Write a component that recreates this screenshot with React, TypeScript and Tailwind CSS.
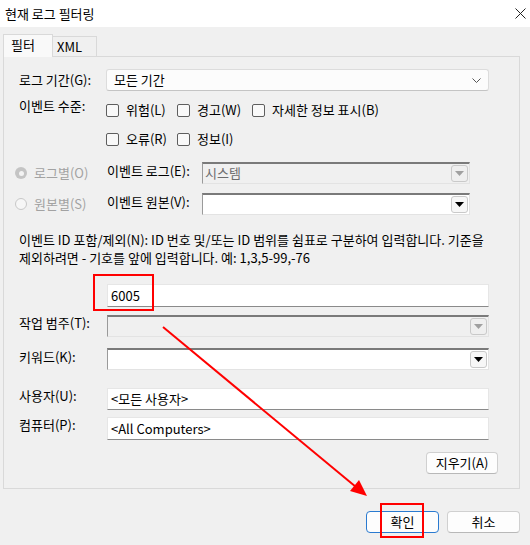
import React from 'react'

const font = { fontFamily: '"Noto Sans CJK KR", "Noto Sans", sans-serif' }

function Check({ label, w }: { label: string; w: string }) {
  return (
    <div className={`flex items-center ${w}`}>
      <span className="w-[13px] h-[13px] rounded-[2px] border border-[#5e5e5e] bg-[#f9f9f9]" />
      <span className="ml-[7px]">{label}</span>
    </div>
  )
}

function Radio({ label, checked }: { label: string; checked?: boolean }) {
  return (
    <div className="flex items-center w-[92px] pl-[11px] text-[#a2a2a2]">
      {checked ? (
        <span className="w-[12px] h-[12px] rounded-full bg-[#c4c4c4] flex items-center justify-center">
          <span className="w-[5px] h-[5px] rounded-full bg-[#f3f3f3]" />
        </span>
      ) : (
        <span className="w-[12px] h-[12px] rounded-full border border-[#c8c8c8] bg-[#f6f6f6]" />
      )}
      <span className="ml-[7px]">{label}</span>
    </div>
  )
}

// old style combo box with sunken border
function ClassicCombo({ w, disabled, value }: { w: string; disabled?: boolean; value?: string }) {
  return (
    <div className={`${w} h-[22px] flex border-t-2 border-l border-t-[#7a7a7a] border-l-[#9a9a9a] border-r border-b border-r-[#e3e3e3] border-b-[#e3e3e3] ${disabled ? 'bg-[#f0f0f0]' : 'bg-white'}`}>
      <div className={`flex-1 pl-[2px] leading-[18px] ${disabled ? 'text-[#6d6d6d]' : ''}`}>{value}</div>
      <div className="w-[19px] flex items-center justify-center">
        <span className={`w-[17px] h-[17px] rounded-[3px] border border-[#c9c9c9] flex items-center justify-center ${disabled ? 'bg-[#efefef]' : 'bg-[#f7f7f7]'}`}>
          <svg width="9" height="5" viewBox="0 0 9 5">
            <polygon points="0,0 9,0 4.5,5" fill={disabled ? '#a0a0a0' : '#000'} />
          </svg>
        </span>
      </div>
    </div>
  )
}

function TextBox({ value, h = 'h-[22px]' }: { value: string; h?: string }) {
  return (
    <div className={`w-[382px] ${h} bg-white border border-[#e6e6e6] border-b-[#8a8a8a] pl-[3px] flex items-center`}>
      {value}
    </div>
  )
}

function Button({ label, w, primary }: { label: string; w: string; primary?: boolean }) {
  return (
    <div
      className={`${w} h-[22px] rounded-[4px] bg-[#fdfdfd] border flex items-center justify-center ${
        primary ? 'border-[#2a7ad0]' : 'border-[#d0d0d0] border-b-[#b8b8b8]'
      }`}
    >
      {label}
    </div>
  )
}

export default function App() {
  return (
    <div className="relative w-[530px] h-[545px] overflow-hidden bg-[#f0f0f0] text-[13px] text-black" style={font}>
      {/* title bar */}
      <div className="h-[27px] bg-white flex items-center justify-between pl-[5px] pr-[3px]">
        <span>현재 로그 필터링</span>
        <svg width="11" height="11" viewBox="0 0 11 11" className="mr-[1px]">
          <path d="M0.5 0.5 L10.5 10.5 M10.5 0.5 L0.5 10.5" stroke="#222" strokeWidth="1" />
        </svg>
      </div>

      {/* tabs */}
      <div className="flex items-end pl-[3px] pt-[6px] h-[29px]">
        <div className="w-[50px] h-[23px] bg-[#f9f9f9] border border-b-0 border-[#d9d9d9] pl-[7px] leading-[20px] relative z-10 -mb-px">
          필터
        </div>
        <div className="w-[44px] h-[20px] border border-l-0 border-b-0 border-[#d9d9d9] pl-[4px] leading-[19px] bg-[#f0f0f0]">
          XML
        </div>
      </div>

      {/* panel */}
      <div className="ml-[3px] w-[517px] h-[433px] border border-[#d9d9d9] bg-[#f0f0f0] flex flex-col">
        <div className="mt-[12px] flex items-center pl-[15px]">
          <span className="w-[87px]">로그 기간(G):</span>
          <div className="w-[383px] h-[22px] rounded-[3px] border border-[#dcdcdc] border-b-[#c4c4c4] bg-[#fcfcfc] flex items-center justify-between pl-[7px] pr-[7px]">
            <span>모든 기간</span>
            <svg width="9" height="5" viewBox="0 0 9 5">
              <path d="M0.5 0.5 L4.5 4.5 L8.5 0.5" stroke="#555" strokeWidth="1" fill="none" />
            </svg>
          </div>
        </div>

        <div className="mt-[7px] flex items-start pl-[15px]">
          <span className="w-[87px] leading-[16px]">이벤트 수준:</span>
          <div className="flex flex-col">
            <div className="mt-[4px] flex h-[16px]">
              <Check label="위험(L)" w="w-[71px]" />
              <Check label="경고(W)" w="w-[75px]" />
              <Check label="자세한 정보 표시(B)" w="w-[150px]" />
            </div>
            <div className="mt-[13px] flex h-[16px]">
              <Check label="오류(R)" w="w-[71px]" />
              <Check label="정보(I)" w="w-[75px]" />
            </div>
          </div>
        </div>

        <div className="mt-[15px] flex items-start">
          <div className="h-[22px] flex items-center">
            <Radio label="로그별(O)" checked />
          </div>
          <span className="w-[95px] leading-[16px] mt-[1px] ml-[11px]">이벤트 로그(E):</span>
          <ClassicCombo w="w-[268px]" disabled value="시스템" />
        </div>

        <div className="mt-[9px] flex items-start">
          <div className="h-[22px] flex items-center">
            <Radio label="원본별(S)" />
          </div>
          <span className="w-[95px] leading-[16px] mt-[1px] ml-[11px]">이벤트 원본(V):</span>
          <ClassicCombo w="w-[268px]" />
        </div>

        <div className="mt-[16px] pl-[15px] leading-[18px] whitespace-nowrap">
          <div>이벤트 ID 포함/제외(N): ID 번호 및/또는 ID 범위를 쉼표로 구분하여 입력합니다. 기준을</div>
          <div>제외하려면 - 기호를 앞에 입력합니다. 예: 1,3,5-99,-76</div>
        </div>

        <div className="mt-[17px] flex items-start pl-[103px]">
          <TextBox value="6005" h="h-[23px]" />
        </div>

        <div className="mt-[8px] flex items-start pl-[15px]">
          <span className="w-[88px] leading-[16px]">작업 범주(T):</span>
          <ClassicCombo w="w-[382px]" disabled />
        </div>

        <div className="mt-[11px] flex items-start pl-[15px]">
          <span className="w-[88px] leading-[16px] mt-[1px]">키워드(K):</span>
          <ClassicCombo w="w-[382px]" />
        </div>

        <div className="mt-[18px] flex items-start pl-[15px]">
          <span className="w-[88px] leading-[16px]">사용자(U):</span>
          <TextBox value="<모든 사용자>" />
        </div>

        <div className="mt-[7px] flex items-start pl-[15px]">
          <span className="w-[88px] leading-[16px]">컴퓨터(P):</span>
          <TextBox value="<All Computers>" h="h-[23px]" />
        </div>

        <div className="mt-[12px] flex justify-end pr-[21px]">
          <Button label="지우기(A)" w="w-[72px]" />
        </div>
      </div>

      {/* bottom buttons */}
      <div className="mt-[22px] flex justify-end gap-[8px] pr-[10px]">
        <Button label="확인" w="w-[73px]" primary />
        <Button label="취소" w="w-[73px]" />
      </div>

      {/* annotation overlay */}
      <div className="absolute left-[93px] top-[274px] w-[61px] h-[37px] border-2 border-[#ff0000]" />
      <div className="absolute left-[380px] top-[503px] w-[44px] h-[35px] border-2 border-[#ff0000]" />
      <svg className="absolute left-0 top-0 pointer-events-none" width="530" height="545">
        <line x1="163" y1="327" x2="356" y2="487" stroke="#ff0000" strokeWidth="2" />
        <polygon points="367,496 350,491 359,480" fill="#ff0000" />
      </svg>
    </div>
  )
}
